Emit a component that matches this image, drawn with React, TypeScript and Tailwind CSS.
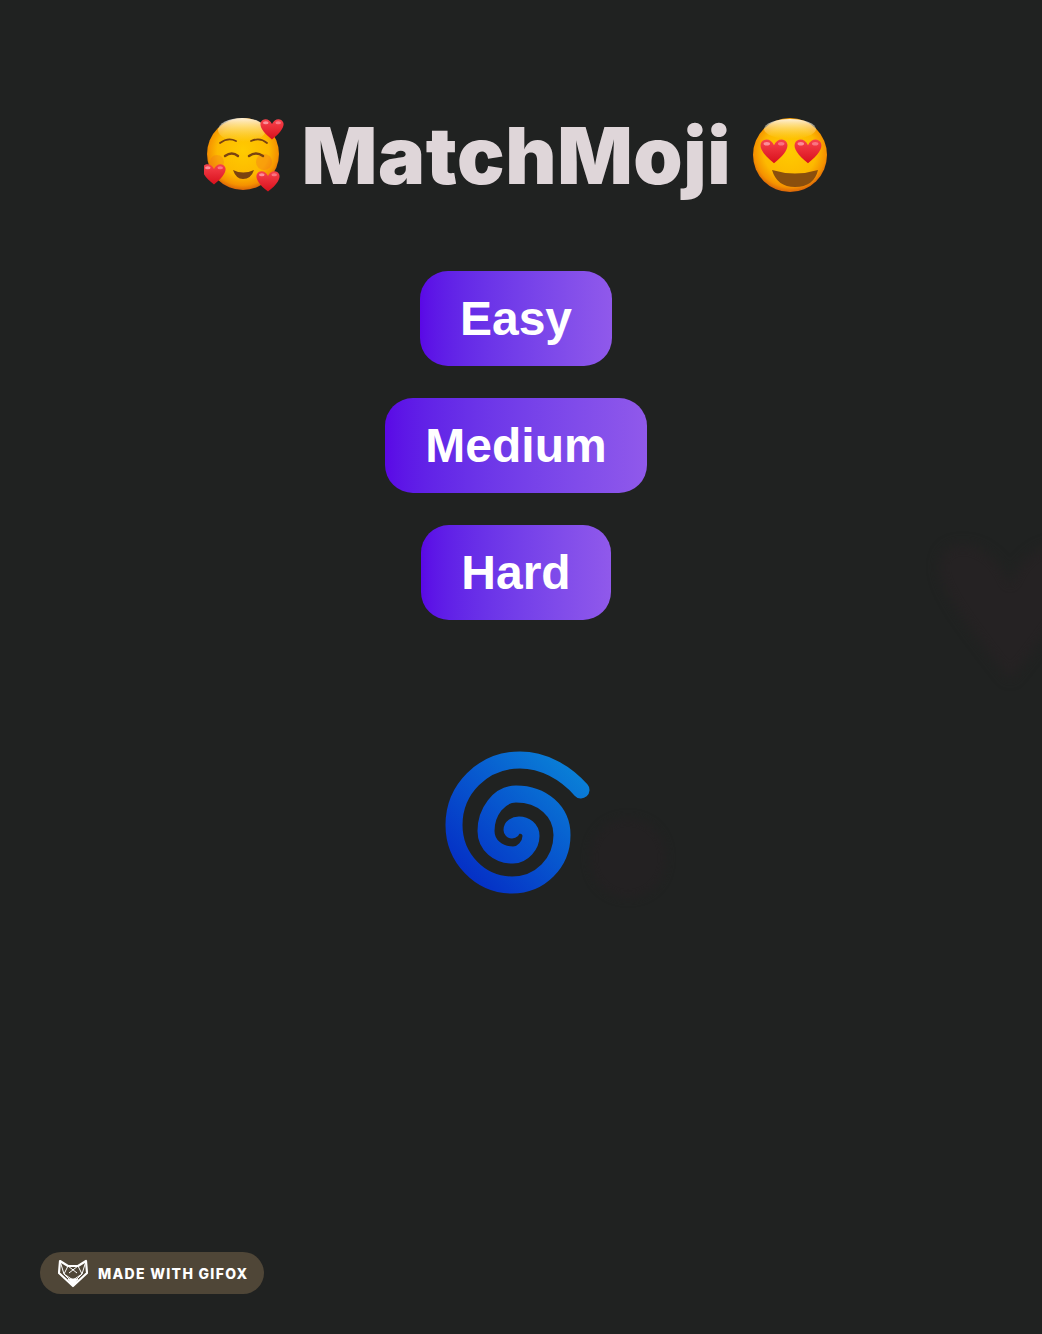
const Heart = ({ x, y, s, id }: { x: number; y: number; s: number; id: string }) => (
  <g transform={`translate(${x} ${y}) scale(${s})`}>
    <path
      d="M0-8C-4-18-15-18-18-11C-21-4-14 6 0 17C14 6 21-4 18-11C15-18 4-18 0-8Z"
      fill={`url(#${id})`}
    />
    <ellipse cx="-10" cy="-10" rx="4.5" ry="2.5" fill="#ffb3bd" opacity="0.7" />
    <ellipse cx="10" cy="-10" rx="4.5" ry="2.5" fill="#ff9dab" opacity="0.6" />
  </g>
);

const FaceDefs = ({ id }: { id: string }) => (
  <defs>
    <radialGradient id={`${id}-face`} cx="50%" cy="45%" r="55%">
      <stop offset="0%" stopColor="#ffcb00" />
      <stop offset="65%" stopColor="#fdb900" />
      <stop offset="88%" stopColor="#f59200" />
      <stop offset="100%" stopColor="#d9640a" />
    </radialGradient>
    <linearGradient id={`${id}-shine`} x1="0" y1="0" x2="0" y2="1">
      <stop offset="0%" stopColor="#fff" stopOpacity="0.85" />
      <stop offset="100%" stopColor="#ffe680" stopOpacity="0" />
    </linearGradient>
    <linearGradient id={`${id}-heart`} x1="0" y1="0" x2="0" y2="1">
      <stop offset="0%" stopColor="#f8434c" />
      <stop offset="100%" stopColor="#d8101c" />
    </linearGradient>
  </defs>
);

const SmilingHearts = () => (
  <svg width="80" height="80" viewBox="0 0 80 80" className="shrink-0">
    <FaceDefs id="a" />
    <circle cx="39" cy="39" r="36" fill="url(#a-face)" />
    <ellipse cx="38" cy="15" rx="24" ry="12" fill="url(#a-shine)" />
    <circle cx="13" cy="47" r="7" fill="#f0701f" opacity="0.3" />
    <circle cx="60" cy="47" r="8" fill="#f0701f" opacity="0.35" />
    <g fill="none" stroke="#7a4310" strokeWidth="1.8" strokeLinecap="round">
      <path d="M16 28Q24 22 32 26" />
      <path d="M47 26Q56 22 63 28" />
      <path d="M21 41Q28 36 34 41" strokeWidth="2.4" />
      <path d="M45 41Q52 36 59 41" strokeWidth="2.4" />
    </g>
    <path d="M29 55Q39 60 50 55Q47 64 39 64Q32 64 29 55Z" fill="#7a4310" />
    <Heart x={68} y={14} s={0.62} id="a-heart" />
    <Heart x={10} y={59} s={0.62} id="a-heart" />
    <Heart x={64} y={66} s={0.62} id="a-heart" />
  </svg>
);

const HeartEyes = () => (
  <svg width="76" height="76" viewBox="0 0 76 76" className="shrink-0">
    <FaceDefs id="b" />
    <circle cx="38" cy="38" r="37" fill="url(#b-face)" />
    <ellipse cx="38" cy="12" rx="26" ry="10" fill="url(#b-shine)" />
    <path d="M20 53Q43 60 66 53Q62 70 43 70Q25 70 20 53Z" fill="#8a4f0d" />
    <Heart x={22} y={34} s={0.72} id="b-heart" />
    <Heart x={56} y={34} s={0.72} id="b-heart" />
  </svg>
);

const Spiral = () => (
  <svg width="145" height="145" viewBox="0 0 145 145" fill="none">
    <defs>
      <linearGradient id="spiral" x1="1" y1="0" x2="0" y2="1">
        <stop offset="0%" stopColor="#0a85d8" />
        <stop offset="100%" stopColor="#0428c4" />
      </linearGradient>
    </defs>
    <path
      d="M136 40C120 22 98 10 75 10C38 10 9 39 9 75C9 108 35 135 67 135C95 135 117 113 117 85C117 61 97 44 71 44C54 44 41 62 41 81C41 95 53 105 68 105C78 105 86 95 86 86C86 79 80 75 74 75C70 75 67 77 67 80"
      stroke="url(#spiral)"
      strokeWidth="17"
      strokeLinecap="round"
    />
  </svg>
);

const FoxLogo = () => (
  <svg width="30" height="29" viewBox="0 0 30 29" fill="none" stroke="#fff" strokeLinejoin="round">
    <path d="M2 2L10 7H20L28 2L29 14L15 27L1 14Z" strokeWidth="2.2" />
    <path d="M10 7L6 15L15 21L24 15L20 7M2 2L6 15M28 2L24 15M6 15L11 20M24 15L19 20M10 7L19 14M20 7L11 14" strokeWidth="1" />
    <path d="M10 20H20L15 27Z" fill="#fff" strokeWidth="1" />
  </svg>
);

const levels = ["Easy", "Medium", "Hard"];

export default function App() {
  return (
    <div className="relative min-h-[1334px] overflow-hidden bg-[#202221] font-['Liberation_Sans',sans-serif]">
      {/* faint ghost hearts floating behind */}
      <div className="absolute left-[925px] top-[525px] text-[#252223] blur-[6px]">
        <svg width="170" height="170" viewBox="-22 -16 44 44" fill="currentColor">
          <path d="M0 0C-3-11-14-13-17-9C-21-4-16 4 0 24C16 4 21-4 17-9C14-13 3-11 0 0Z" />
        </svg>
      </div>
      <div className="absolute left-[590px] top-[818px] h-[80px] w-[76px] rounded-full bg-[#232122] blur-[4px]" />

      <main className="relative flex flex-col items-center pt-[113px] pr-[10px]">
        <div className="flex h-[84px] items-center">
          <SmilingHearts />
          <h1 className="ml-[18px] mr-[21px] font-['Inter',sans-serif] text-[79px] leading-none font-black tracking-[0.6px] text-[#dfd6d9]">
            MatchMoji
          </h1>
          <HeartEyes />
        </div>

        <div className="mt-[74px] flex flex-col items-center gap-8">
          {levels.map((level) => (
            <button
              key={level}
              className="rounded-[28px] bg-gradient-to-r from-[#5a08e6] to-[#9059eb] px-10 py-5 text-5xl leading-[55px] font-bold text-white"
            >
              {level}
            </button>
          ))}
        </div>

        <div className="mt-[130px] ml-[3px]">
          <Spiral />
        </div>
      </main>

      <div className="absolute bottom-[40px] left-[40px] flex h-[42px] w-[224px] items-center gap-[10px] rounded-full bg-[#4f4637] pl-[18px]">
        <FoxLogo />
        <span className="font-['Inter',sans-serif] text-[14px] font-extrabold tracking-[1.3px] text-white">MADE WITH GIFOX</span>
      </div>
    </div>
  );
}
